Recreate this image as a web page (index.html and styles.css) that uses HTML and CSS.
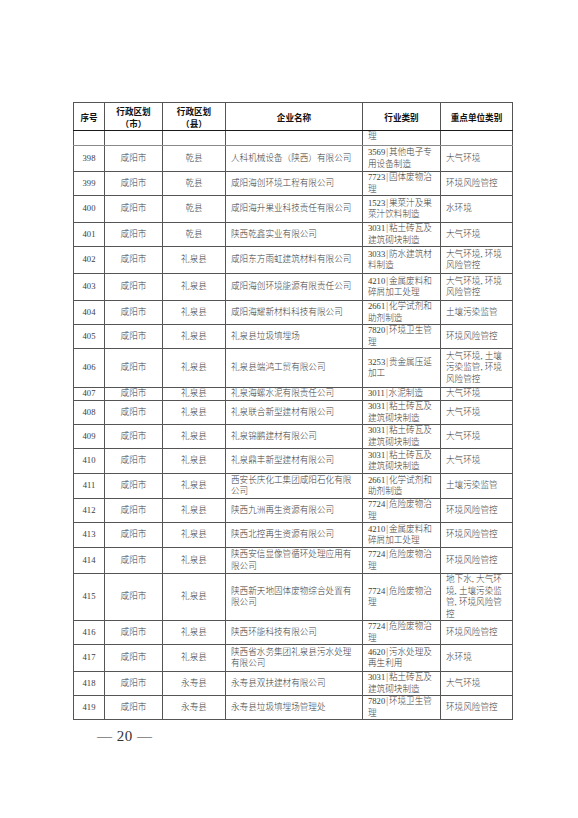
FILE: index.html
```html
<!DOCTYPE html>
<html lang="zh-CN">
<head>
<meta charset="utf-8">
<title>表格 第20页</title>
<link rel="stylesheet" href="styles.css">
</head>
<body>
<div class="page">
<table class="list">
<colgroup>
<col class="c-no"><col class="c-city"><col class="c-county"><col class="c-name"><col class="c-ind"><col class="c-cat">
</colgroup>
<thead>
<tr class="h28"><th>序号</th><th>行政区划<br>（市）</th><th>行政区划<br>（县）</th><th>企业名称</th><th>行业类别</th><th>重点单位类别</th></tr>
</thead>
<tbody>
<tr class="h15 light"><td></td><td></td><td></td><td></td><td class="l top">理</td><td></td></tr>
<tr class="h26"><td>398</td><td>咸阳市</td><td>乾县</td><td class="l">人科机械设备（陕西）有限公司</td><td class="l">3569<span class="sep">|</span>其他电子专<br>用设备制造</td><td class="l">大气环境</td></tr>
<tr class="h23"><td>399</td><td>咸阳市</td><td>乾县</td><td class="l">咸阳海创环境工程有限公司</td><td class="l">7723<span class="sep">|</span>固体废物治<br>理</td><td class="l">环境风险管控</td></tr>
<tr class="h27"><td>400</td><td>咸阳市</td><td>乾县</td><td class="l">咸阳海升果业科技责任有限公司</td><td class="l">1523<span class="sep">|</span>果菜汁及果<br>菜汁饮料制造</td><td class="l">水环境</td></tr>
<tr class="h24 dark"><td>401</td><td>咸阳市</td><td>乾县</td><td class="l">陕西乾鑫实业有限公司</td><td class="l">3031<span class="sep">|</span>粘土砖瓦及<br>建筑砌块制造</td><td class="l">大气环境</td></tr>
<tr class="h27"><td>402</td><td>咸阳市</td><td>礼泉县</td><td class="l">咸阳东方雨虹建筑材料有限公司</td><td class="l">3033<span class="sep">|</span>防水建筑材<br>料制造</td><td class="l">大气环境, 环境<br>风险管控</td></tr>
<tr class="h27"><td>403</td><td>咸阳市</td><td>礼泉县</td><td class="l">咸阳海创环境能源有限责任公司</td><td class="l">4210<span class="sep">|</span>金属废料和<br>碎屑加工处理</td><td class="l">大气环境, 环境<br>风险管控</td></tr>
<tr class="h24"><td>404</td><td>咸阳市</td><td>礼泉县</td><td class="l">咸阳海耀新材料科技有限公司</td><td class="l">2661<span class="sep">|</span>化学试剂和<br>助剂制造</td><td class="l">土壤污染监管</td></tr>
<tr class="h24"><td>405</td><td>咸阳市</td><td>礼泉县</td><td class="l">礼泉县垃圾填埋场</td><td class="l">7820<span class="sep">|</span>环境卫生管<br>理</td><td class="l">环境风险管控</td></tr>
<tr class="h39"><td>406</td><td>咸阳市</td><td>礼泉县</td><td class="l">礼泉县端鸿工贸有限公司</td><td class="l">3253<span class="sep">|</span>贵金属压延<br>加工</td><td class="l">大气环境, 土壤<br>污染监管, 环境<br>风险管控</td></tr>
<tr class="h13"><td>407</td><td>咸阳市</td><td>礼泉县</td><td class="l">礼泉海螺水泥有限责任公司</td><td class="l">3011<span class="sep">|</span>水泥制造</td><td class="l">大气环境</td></tr>
<tr class="h24"><td>408</td><td>咸阳市</td><td>礼泉县</td><td class="l">礼泉联合新型建材有限公司</td><td class="l">3031<span class="sep">|</span>粘土砖瓦及<br>建筑砌块制造</td><td class="l">大气环境</td></tr>
<tr class="h24"><td>409</td><td>咸阳市</td><td>礼泉县</td><td class="l">礼泉锦鹏建材有限公司</td><td class="l">3031<span class="sep">|</span>粘土砖瓦及<br>建筑砌块制造</td><td class="l">大气环境</td></tr>
<tr class="h25"><td>410</td><td>咸阳市</td><td>礼泉县</td><td class="l">礼泉鼎丰新型建材有限公司</td><td class="l">3031<span class="sep">|</span>粘土砖瓦及<br>建筑砌块制造</td><td class="l">大气环境</td></tr>
<tr class="h25"><td>411</td><td>咸阳市</td><td>礼泉县</td><td class="l">西安长庆化工集团咸阳石化有限<br>公司</td><td class="l">2661<span class="sep">|</span>化学试剂和<br>助剂制造</td><td class="l">土壤污染监管</td></tr>
<tr class="h24"><td>412</td><td>咸阳市</td><td>礼泉县</td><td class="l">陕西九洲再生资源有限公司</td><td class="l">7724<span class="sep">|</span>危险废物治<br>理</td><td class="l">环境风险管控</td></tr>
<tr class="h25"><td>413</td><td>咸阳市</td><td>礼泉县</td><td class="l">陕西北控再生资源有限公司</td><td class="l">4210<span class="sep">|</span>金属废料和<br>碎屑加工处理</td><td class="l">环境风险管控</td></tr>
<tr class="h26"><td>414</td><td>咸阳市</td><td>礼泉县</td><td class="l">陕西安信显像管循环处理应用有<br>限公司</td><td class="l">7724<span class="sep">|</span>危险废物治<br>理</td><td class="l">环境风险管控</td></tr>
<tr class="h47"><td>415</td><td>咸阳市</td><td>礼泉县</td><td class="l">陕西新天地固体废物综合处置有<br>限公司</td><td class="l">7724<span class="sep">|</span>危险废物治<br>理</td><td class="l">地下水, 大气环<br>境, 土壤污染监<br>管, 环境风险管<br>控</td></tr>
<tr class="h24"><td>416</td><td>咸阳市</td><td>礼泉县</td><td class="l">陕西环能科技有限公司</td><td class="l">7724<span class="sep">|</span>危险废物治<br>理</td><td class="l">环境风险管控</td></tr>
<tr class="h27"><td>417</td><td>咸阳市</td><td>礼泉县</td><td class="l">陕西省水务集团礼泉县污水处理<br>有限公司</td><td class="l">4620<span class="sep">|</span>污水处理及<br>再生利用</td><td class="l">水环境</td></tr>
<tr class="h24"><td>418</td><td>咸阳市</td><td>永寿县</td><td class="l">永寿县双扶建材有限公司</td><td class="l">3031<span class="sep">|</span>粘土砖瓦及<br>建筑砌块制造</td><td class="l">大气环境</td></tr>
<tr class="h24"><td>419</td><td>咸阳市</td><td>永寿县</td><td class="l">永寿县垃圾填埋场管理处</td><td class="l">7820<span class="sep">|</span>环境卫生管<br>理</td><td class="l">环境风险管控</td></tr>
</tbody>
</table>
<div class="folio">— 20 —</div>
</div>
</body>
</html>
```

FILE: styles.css
```css
html, body {
  margin: 0;
  padding: 0;
  background: #ffffff;
}

.page {
  width: 578px;
  height: 818px;
  padding: 102px 0 0 73px;
  box-sizing: border-box;
}

.list {
  border-collapse: collapse;
  table-layout: fixed;
  width: 439px;
  border: 1px solid #1a1a1a;
  font-family: "Liberation Serif", "Noto Sans CJK SC", serif;
  font-size: 8.6px;
  font-weight: 300;
  color: #3c3c3c;
}

.c-no { width: 31px; }
.c-city { width: 58px; }
.c-county { width: 63px; }
.c-name { width: 137px; }
.c-ind { width: 78px; }
.c-cat { width: 72px; }

.list th,
.list td {
  border: 1px solid #555555;
  padding: 0 4px;
  line-height: 11.5px;
  text-align: center;
  vertical-align: middle;
  overflow: hidden;
  white-space: nowrap;
}

.list th {
  font-family: "Noto Sans CJK SC", sans-serif;
  font-weight: 700;
  font-size: 8.6px;
  color: #111111;
  border-bottom: 1px solid #1a1a1a;
  line-height: 12px;
}

.list td.l {
  text-align: left;
  padding-left: 5px;
}

.list td.top {
  vertical-align: top;
}

.light td {
  border-bottom-color: #8a8a8a;
}

.sep {
  display: inline-block;
  margin: 0 1px;
  color: #666666;
  transform: scaleY(1.1);
}

.h13 { height: 13px; }
.h15 { height: 15px; }
.h23 { height: 23px; }
.h24 { height: 24px; }
.h25 { height: 25px; }
.h26 { height: 26px; }
.h27 { height: 27px; }
.h28 { height: 28px; }
.h39 { height: 39px; }
.h47 { height: 47px; }

.folio {
  margin: 7px 0 0 24px;
  font-family: "Liberation Serif", serif;
  font-size: 15px;
  line-height: 18px;
  color: #333333;
  letter-spacing: 0.5px;
}
```
